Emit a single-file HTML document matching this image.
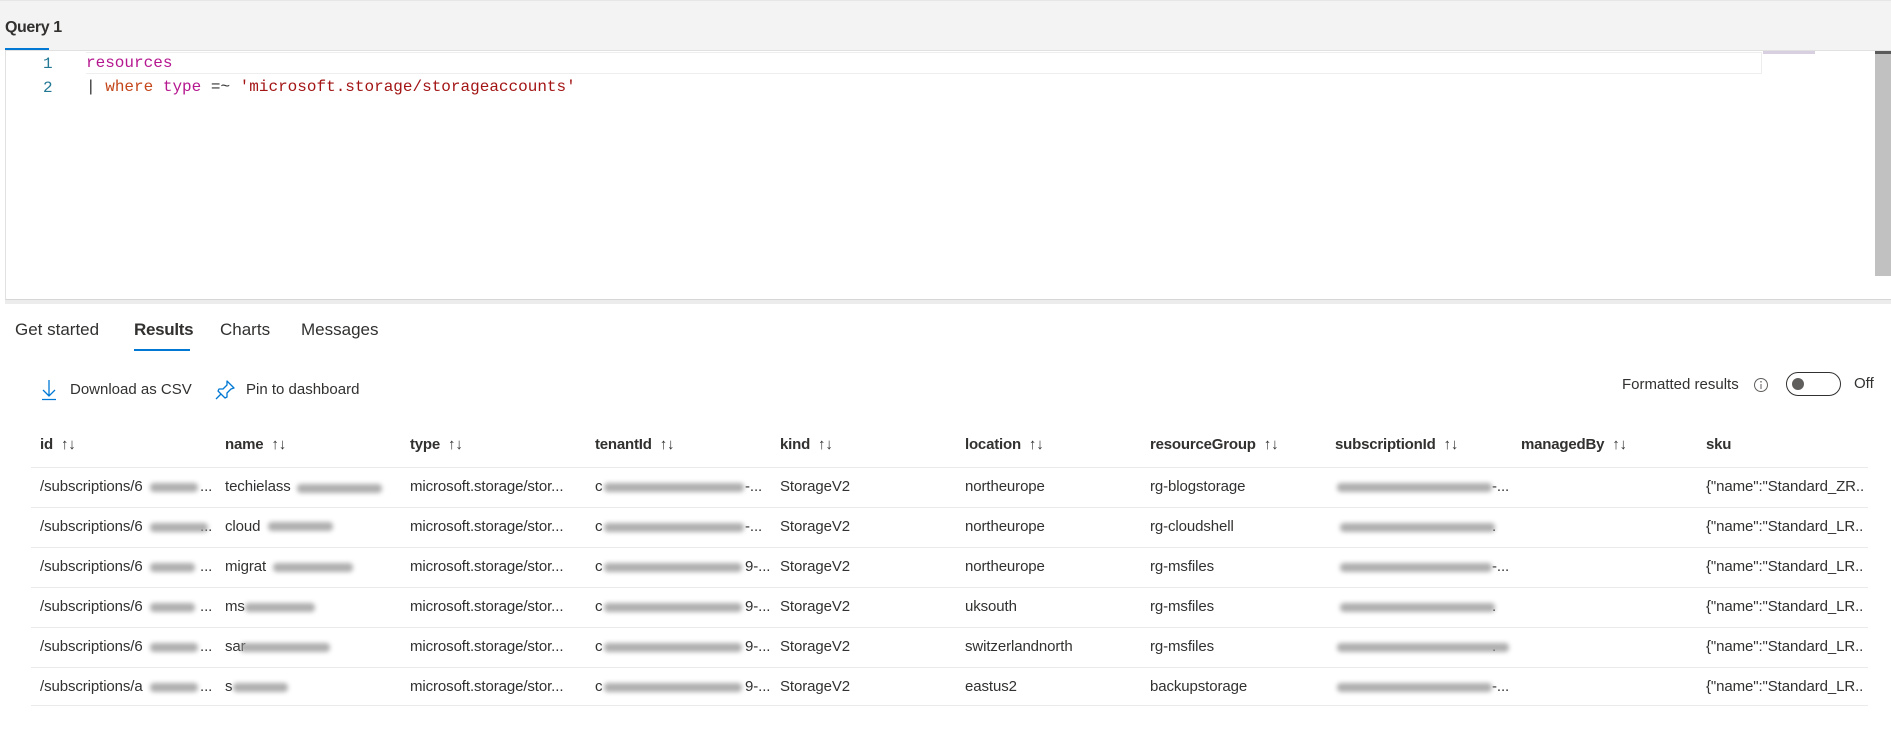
<!DOCTYPE html>
<html><head><meta charset="utf-8"><style>
*{margin:0;padding:0;box-sizing:border-box}
body{width:1891px;height:729px;background:#fff;position:relative;overflow:hidden;font-family:"Liberation Sans",sans-serif;color:#323130}
.a{position:absolute;white-space:nowrap}
.mono{font-family:"Liberation Mono",monospace;font-size:16px}
.blur{position:absolute;height:9px;background:#9a9a9a;filter:blur(2.5px);border-radius:4px;opacity:.8}
.hd{font-size:15px;font-weight:bold;color:#323130;top:436px;letter-spacing:-.2px}
.c{font-size:15px;color:#323130;letter-spacing:-.1px}
.ln{position:absolute;left:31px;width:1837px;height:1px;background:#edebe9}
.ar{font-weight:normal;margin-left:8px;font-size:15px}
</style></head><body>
<div class="a" style="left:0;top:0;width:1891px;height:50px;background:#f3f3f3;border-top:1px solid #e6e6e6"></div>
<div class="a" style="left:5px;top:19px;font-size:16px;font-weight:bold;color:#323130;letter-spacing:-.4px">Query 1</div>
<div class="a" style="left:5px;top:48px;width:44px;height:2px;background:#0078d4"></div>
<div class="a" style="left:5px;top:50px;width:1886px;height:250px;border-left:1px solid #e1e1e1;border-top:1px solid #e1e1e1;border-bottom:1px solid #d6d6d6;background:#fff"></div>
<div class="a" style="left:86px;top:52px;width:1676px;height:22px;border:1px solid #eeeeee;border-left:none"></div>
<div class="a mono" style="left:43px;top:52px;color:#237893;line-height:24px">1<br>2</div>
<div class="a mono" style="left:86px;top:51px;line-height:24px"><span style="color:#b5178f">resources</span><br><span style="color:#333">|</span> <span style="color:#c4461a">where</span> <span style="color:#b5178f">type</span> <span style="color:#333">=~</span> <span style="color:#a31515">'microsoft.storage/storageaccounts'</span></div>
<div class="a" style="left:1763px;top:51px;width:52px;height:3px;background:#d8d0e0"></div>
<div class="a" style="left:1875px;top:51px;width:16px;height:225px;background:#c1c1c1;border-top:3px solid #5a5a5a"></div>
<div class="a" style="left:5px;top:300px;width:1886px;height:4px;background:#ececec"></div>
<div class="a" style="left:15px;top:320px;font-size:17px;color:#323130">Get started</div>
<div class="a" style="left:134px;top:320px;font-size:17px;font-weight:bold;color:#323130;letter-spacing:-.3px">Results</div>
<div class="a" style="left:134px;top:349px;width:56px;height:2px;background:#0078d4"></div>
<div class="a" style="left:220px;top:320px;font-size:17px;color:#323130">Charts</div>
<div class="a" style="left:301px;top:320px;font-size:17px;color:#323130">Messages</div>
<svg class="a" style="left:41px;top:379px" width="16" height="22" viewBox="0 0 16 22"><path d="M8 1v16M2 11l6 6 6-6M1 20.5h14" stroke="#0078d4" stroke-width="1.3" fill="none"/></svg>
<div class="a" style="left:70px;top:381px;font-size:15px">Download as CSV</div>
<svg class="a" style="left:214px;top:379px" width="22" height="22" viewBox="0 0 22 22"><path d="M13 2l7 7-3 1-4 4 0 4-2 1-7-7 1-2 4 0 4-4zM7 15l-5 5" stroke="#0078d4" stroke-width="1.3" fill="none" stroke-linejoin="round"/></svg>
<div class="a" style="left:246px;top:381px;font-size:15px">Pin to dashboard</div>
<div class="a" style="left:1622px;top:376px;font-size:15px">Formatted results</div>
<svg class="a" style="left:1753px;top:377px" width="16" height="16"><circle cx="8" cy="8" r="6.5" stroke="#605e5c" fill="none"/><path d="M8 7v5" stroke="#605e5c"/><circle cx="8" cy="4.8" r=".8" fill="#605e5c"/></svg>
<div class="a" style="left:1786px;top:372px;width:55px;height:24px;border:1px solid #323130;border-radius:12px"></div>
<div class="a" style="left:1792px;top:378px;width:12px;height:12px;border-radius:6px;background:#605e5c"></div>
<div class="a" style="left:1854px;top:375px;font-size:15px">Off</div>

<div class="a hd" style="left:40px">id<span class="ar">↑↓</span></div>
<div class="a hd" style="left:225px">name<span class="ar">↑↓</span></div>
<div class="a hd" style="left:410px">type<span class="ar">↑↓</span></div>
<div class="a hd" style="left:595px">tenantId<span class="ar">↑↓</span></div>
<div class="a hd" style="left:780px">kind<span class="ar">↑↓</span></div>
<div class="a hd" style="left:965px">location<span class="ar">↑↓</span></div>
<div class="a hd" style="left:1150px">resourceGroup<span class="ar">↑↓</span></div>
<div class="a hd" style="left:1335px">subscriptionId<span class="ar">↑↓</span></div>
<div class="a hd" style="left:1521px">managedBy<span class="ar">↑↓</span></div>
<div class="a hd" style="left:1706px">sku</div>

<div class="ln" style="top:467px"></div><div class="ln" style="top:507px"></div><div class="ln" style="top:547px"></div><div class="ln" style="top:587px"></div><div class="ln" style="top:627px"></div><div class="ln" style="top:667px"></div><div class="ln" style="top:705px"></div>

<div class="a c" style="left:40px;top:467px;line-height:40px">/subscriptions/6<br>/subscriptions/6<br>/subscriptions/6<br>/subscriptions/6<br>/subscriptions/6<br>/subscriptions/a</div>
<div class="a c" style="left:200px;top:467px;line-height:40px">...<br>...<br>...<br>...<br>...<br>...</div>
<div class="a c" style="left:225px;top:467px;line-height:40px">techielass<br>cloud<br>migrat<br>ms<br>sar<br>s</div>
<div class="a c" style="left:410px;top:467px;line-height:40px">microsoft.storage/stor...<br>microsoft.storage/stor...<br>microsoft.storage/stor...<br>microsoft.storage/stor...<br>microsoft.storage/stor...<br>microsoft.storage/stor...</div>
<div class="a c" style="left:595px;top:467px;line-height:40px">c<br>c<br>c<br>c<br>c<br>c</div>
<div class="a c" style="left:745px;top:467px;line-height:40px">-...<br>-...<br>9-...<br>9-...<br>9-...<br>9-...</div>
<div class="a c" style="left:780px;top:467px;line-height:40px">StorageV2<br>StorageV2<br>StorageV2<br>StorageV2<br>StorageV2<br>StorageV2</div>
<div class="a c" style="left:965px;top:467px;line-height:40px">northeurope<br>northeurope<br>northeurope<br>uksouth<br>switzerlandnorth<br>eastus2</div>
<div class="a c" style="left:1150px;top:467px;line-height:40px">rg-blogstorage<br>rg-cloudshell<br>rg-msfiles<br>rg-msfiles<br>rg-msfiles<br>backupstorage</div>
<div class="a c" style="left:1492px;top:467px;line-height:40px">-...<br>.<br>-...<br>.<br>.<br>-...</div>
<div class="a c" style="left:1706px;top:467px;line-height:40px">{"name":"Standard_ZR..<br>{"name":"Standard_LR..<br>{"name":"Standard_LR..<br>{"name":"Standard_LR..<br>{"name":"Standard_LR..<br>{"name":"Standard_LR..</div>

<div class="blur" style="left:150px;top:483px;width:48px"></div><div class="blur" style="left:150px;top:523px;width:58px"></div><div class="blur" style="left:150px;top:563px;width:45px"></div><div class="blur" style="left:150px;top:603px;width:45px"></div><div class="blur" style="left:150px;top:643px;width:48px"></div><div class="blur" style="left:150px;top:683px;width:48px"></div>
<div class="blur" style="left:297px;top:484px;width:85px"></div><div class="blur" style="left:268px;top:522px;width:65px"></div><div class="blur" style="left:273px;top:563px;width:80px"></div><div class="blur" style="left:245px;top:603px;width:70px"></div><div class="blur" style="left:240px;top:643px;width:90px"></div><div class="blur" style="left:233px;top:683px;width:55px"></div>
<div class="blur" style="left:604px;top:483px;width:140px"></div><div class="blur" style="left:604px;top:523px;width:140px"></div><div class="blur" style="left:604px;top:563px;width:138px"></div><div class="blur" style="left:604px;top:603px;width:138px"></div><div class="blur" style="left:604px;top:643px;width:138px"></div><div class="blur" style="left:604px;top:683px;width:138px"></div>
<div class="blur" style="left:1337px;top:483px;width:155px"></div><div class="blur" style="left:1340px;top:523px;width:155px"></div><div class="blur" style="left:1340px;top:563px;width:152px"></div><div class="blur" style="left:1340px;top:603px;width:155px"></div><div class="blur" style="left:1337px;top:643px;width:172px"></div><div class="blur" style="left:1337px;top:683px;width:155px"></div>
</body></html>
